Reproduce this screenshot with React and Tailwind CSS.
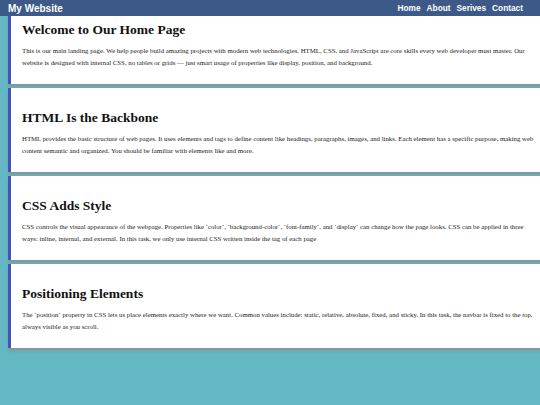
export default function App() {
  const sections = [
    {
      title: 'Welcome to Our Home Page',
      text: 'This is our main landing page. We help people build amazing projects with modern web technologies. HTML, CSS, and JavaScript are core skills every web developer must master. Our website is designed with internal CSS, no tables or grids — just smart usage of properties like display, position, and background.',
    },
    {
      title: 'HTML Is the Backbone',
      text: 'HTML provides the basic structure of web pages. It uses elements and tags to define content like headings, paragraphs, images, and links. Each element has a specific purpose, making web content semantic and organized. You should be familiar with elements like and more.',
    },
    {
      title: 'CSS Adds Style',
      text: 'CSS controls the visual appearance of the webpage. Properties like `color`, `background-color`, `font-family`, and `display` can change how the page looks. CSS can be applied in three ways: inline, internal, and external. In this task, we only use internal CSS written inside the tag of each page',
    },
    {
      title: 'Positioning Elements',
      text: 'The `position` property in CSS lets us place elements exactly where we want. Common values include: static, relative, absolute, fixed, and sticky. In this task, the navbar is fixed to the top, always visible as you scroll.',
    },
  ];

  return (
    <div className="relative w-[540px] h-[405px] overflow-hidden bg-[#64b8c4] font-['Liberation_Serif',serif]">
      {/* fixed navbar */}
      <nav className="absolute top-0 left-0 right-0 z-10 h-4 bg-[#3d5987] flex items-center justify-between pl-2 pr-[17px] font-['Liberation_Sans',Arial,sans-serif] font-bold text-white">
        <span className="text-[10px]">My Website</span>
        <div className="flex gap-[6px] text-[8.3px]">
          <span>Home</span>
          <span>About</span>
          <span>Serives</span>
          <span>Contact</span>
        </div>
      </nav>

      <div className="flex flex-col gap-1 ml-2 -mr-2">
        {sections.map((s) => (
          <section key={s.title}
            className="h-[84px] bg-white border-l-[3px] border-[#3a56c4] pl-[11px] pr-[13px] pt-[20px] shadow-[0_3px_3px_rgba(140,140,140,0.7)]">
            <h2 className="text-[13.5px] leading-5 font-bold text-[#111]">{s.title}</h2>
            <p className="mt-[5px] text-[6.8px] leading-[12px] text-[#222]">{s.text}</p>
          </section>
        ))}
      </div>
    </div>
  );
}
